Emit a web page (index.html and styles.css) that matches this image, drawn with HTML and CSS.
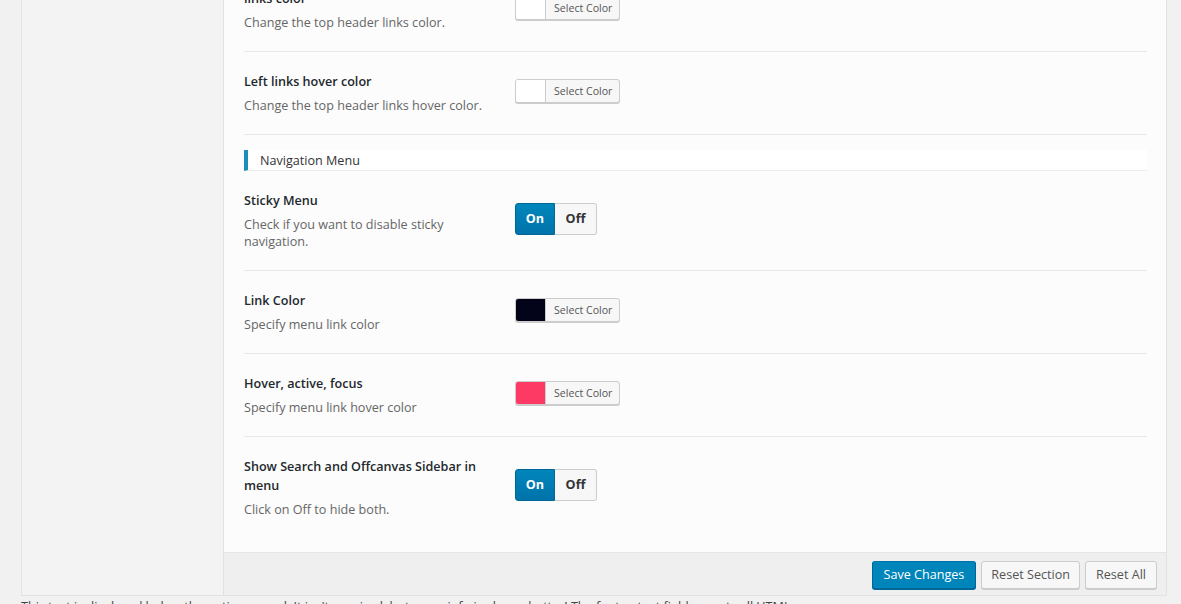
FILE: index.html
```html
<!DOCTYPE html>
<html lang="en">
<head>
<meta charset="utf-8">
<title>Theme Options</title>
<link rel="stylesheet" href="styles.css">
</head>
<body>
<div class="page">
  <div class="panel">
    <aside class="sidebar"></aside>
    <div class="main">
      <div class="content">
        <div class="row">
          <div class="label">
            <div class="title">links color</div>
            <div class="desc">Change the top header links color.</div>
          </div>
          <div class="control picker-cell">
            <span class="picker"><span class="swatch swatch-white"></span><span class="picker-label">Select Color</span></span>
          </div>
        </div>
        <div class="row">
          <div class="label">
            <div class="title">Left links hover color</div>
            <div class="desc">Change the top header links hover color.</div>
          </div>
          <div class="control picker-cell">
            <span class="picker"><span class="swatch swatch-white"></span><span class="picker-label">Select Color</span></span>
          </div>
        </div>
        <div class="section-head">Navigation Menu</div>
        <div class="row">
          <div class="label">
            <div class="title">Sticky Menu</div>
            <div class="desc">Check if you want to disable sticky navigation.</div>
          </div>
          <div class="control switch-cell">
            <span class="switch"><span class="sw-on">On</span><span class="sw-off">Off</span></span>
          </div>
        </div>
        <div class="row">
          <div class="label">
            <div class="title">Link Color</div>
            <div class="desc">Specify menu link color</div>
          </div>
          <div class="control picker-cell">
            <span class="picker"><span class="swatch swatch-dark"></span><span class="picker-label">Select Color</span></span>
          </div>
        </div>
        <div class="row">
          <div class="label">
            <div class="title">Hover, active, focus</div>
            <div class="desc">Specify menu link hover color</div>
          </div>
          <div class="control picker-cell">
            <span class="picker"><span class="swatch swatch-pink"></span><span class="picker-label">Select Color</span></span>
          </div>
        </div>
        <div class="row row-last">
          <div class="label">
            <div class="title">Show Search and Offcanvas Sidebar in menu</div>
            <div class="desc">Click on Off to hide both.</div>
          </div>
          <div class="control switch-cell">
            <span class="switch"><span class="sw-on">On</span><span class="sw-off">Off</span></span>
          </div>
        </div>
      </div>
      <div class="footer-bar">
        <button class="btn btn-primary">Save Changes</button>
        <button class="btn btn-narrow">Reset Section</button>
        <button class="btn">Reset All</button>
      </div>
    </div>
  </div>
  <p class="footer-text">This text is displayed below the options panel. It isn't required, but more info is always better! The footer_text field accepts all HTML.</p>
</div>
</body>
</html>
```
FILE: styles.css
```css
* { box-sizing: border-box; }
html, body { margin: 0; padding: 0; }
body {
  background: #f1f1f1;
  font-family: "Open Sans", "Noto Sans", sans-serif;
  font-size: 12.6px;
  color: #444;
  overflow: hidden;
}
.page { margin-top: -32px; }
.panel {
  display: flex;
  margin: 0 14px 0 21px;
  border: 1px solid #e2e2e2;
  background: #fcfcfc;
}
.sidebar {
  width: 202px;
  flex: none;
  background: #f3f3f3;
  border-right: 1px solid #e2e2e2;
}
.main { flex: 1; display: flex; flex-direction: column; }
.content { padding: 0 19px 14px 20px; }
.row {
  display: flex;
  padding: 20px 0;
  border-bottom: 1px solid #e8e8e8;
}
.row-last { border-bottom: none; }
.label { width: 271px; flex: none; padding-right: 18px; }
.title {
  font-weight: 600;
  color: #23282d;
  line-height: 19px;
}
.desc {
  margin-top: 6px;
  color: #666;
  line-height: 17px;
}
.picker-cell { padding-top: 7px; }
.switch-cell { padding-top: 12px; }
.picker {
  display: inline-flex;
  height: 24px;
  border: 1px solid #ccc;
  border-radius: 3px;
  box-shadow: 0 1px 0 #ccc;
  background: #f7f7f7;
  overflow: hidden;
}
.swatch { width: 30px; border-right: 1px solid #ccc; }
.swatch-white { background: #fff; }
.swatch-dark { background: #03031a; }
.swatch-pink { background: #fd3a64; }
.picker-label {
  font-size: 10.6px;
  line-height: 23px;
  color: #555;
  padding: 0 7px 0 8px;
}
.section-head {
  margin-top: 15px;
  height: 21px;
  line-height: 22px;
  background: #fff;
  border-left: 4px solid #1e8cbe;
  border-bottom: 1px solid #ececec;
  padding-left: 12px;
  color: #333;
}
.switch {
  display: inline-flex;
  height: 32px;
  font-weight: 700;
  font-size: 12.6px;
  line-height: 30px;
}
.sw-on {
  width: 40px;
  text-align: center;
  color: #fff;
  background: linear-gradient(#0086bb, #0073aa);
  border: 1px solid #006799;
  border-radius: 3px 0 0 3px;
}
.sw-off {
  width: 42px;
  text-align: center;
  color: #333;
  background: #f7f7f7;
  border: 1px solid #ccc;
  border-left: none;
  border-radius: 0 3px 3px 0;
}
.footer-bar {
  display: flex;
  justify-content: flex-end;
  gap: 5px;
  padding: 8px 9px 6px;
  background: #efefef;
  border-top: 1px solid #e5e5e5;
}
.btn {
  height: 28px;
  padding: 0 10px 1px;
  font-family: inherit;
  font-size: 12.6px;
  line-height: 26px;
  color: #555;
  background: #f7f7f7;
  border: 1px solid #ccc;
  border-radius: 3px;
  box-shadow: 0 1px 0 #ccc;
}
.btn-narrow { padding: 0 9px 1px; }
.btn-primary {
  padding: 0 11px 1px;
  color: #fff;
  background: #0085ba;
  border-color: #0073aa #006799 #006799;
  box-shadow: 0 1px 0 #006799;
}
.footer-text {
  margin: 2px 0 0 21px;
  line-height: 17px;
  color: #444;
}
```
